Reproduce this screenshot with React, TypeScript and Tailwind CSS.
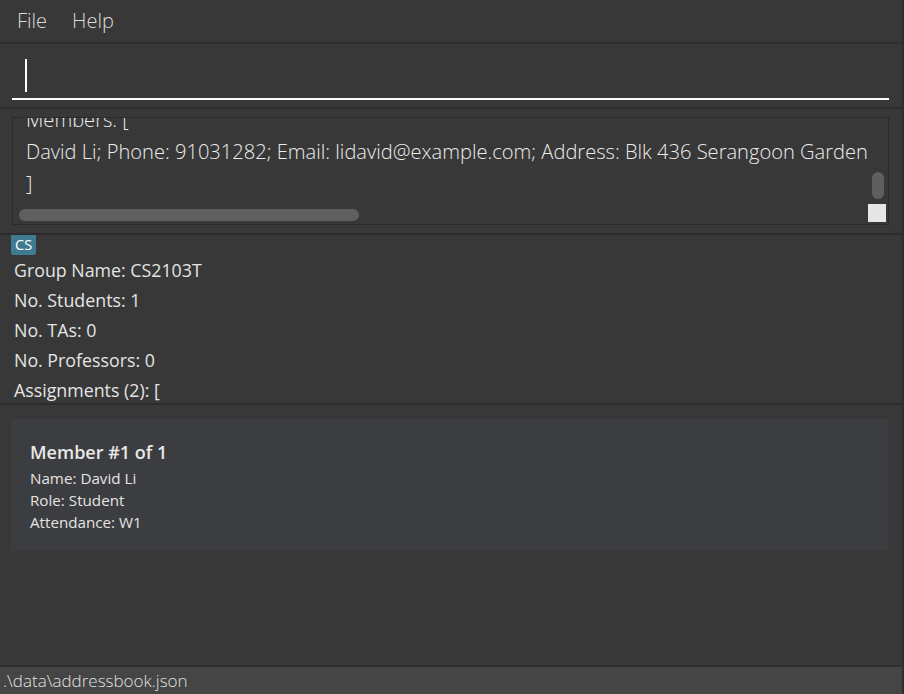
export default function App() {
  const font = { fontFamily: '"Open Sans", "Noto Sans", sans-serif' };
  return (
    <div
      className="w-[904px] h-[694px] bg-[#383838] text-[#e8e8e8] flex flex-col overflow-hidden border-r-2 border-[#2e2e2e]"
      style={font}
    >
      {/* menu bar */}
      <div className="h-[44px] shrink-0 flex items-center gap-[25px] px-[17px] border-b-2 border-[#2f2f2f] text-[20px] font-light text-[#dcdcdc]">
        <span>File</span>
        <span>Help</span>
      </div>

      {/* command box */}
      <div className="h-[65px] shrink-0 pl-[12px] pr-[13px] pt-[14px] border-b-2 border-[#2c2c2c]">
        <div className="h-[42px] border-b-2 border-white flex items-start pl-[13px] pt-[1px]">
          <div className="w-[2px] h-[33px] bg-white" />
        </div>
      </div>

      {/* result display */}
      <div className="h-[126px] shrink-0 pl-[12px] pr-[13px] pt-[8px] pb-[8px] border-b-2 border-[#2c2c2c]">
        <div className="relative h-full border border-[#2a2a2a] bg-[#383838] overflow-hidden">
          <div className="pl-[13px] -mt-[14px] text-[20.1px] font-light leading-[32px] whitespace-nowrap text-[#ececec]">
            <div>Members: [</div>
            <div>David Li; Phone: 91031282; Email: lidavid@example.com; Address: Blk 436 Serangoon Garden</div>
            <div>]</div>
          </div>
          <div className="absolute left-[6px] top-[91px] w-[340px] h-[12px] rounded-full bg-[#5f5f5f]" />
          <div className="absolute right-[4px] top-[54px] w-[12px] h-[27px] rounded-full bg-[#5f5f5f]" />
          <div className="absolute right-[2px] bottom-[2px] w-[18px] h-[18px] bg-[#e6e6e6]" />
        </div>
      </div>

      {/* group panel */}
      <div className="h-[170px] shrink-0 px-[11px] border-b-2 border-[#2c2c2c] overflow-hidden">
        <div className="-mt-[1px] h-[22px] flex">
          <span className="px-[4px] h-[21px] leading-[21px] rounded-[2px] bg-[#3e7b91] text-[14.5px] text-white">
            CS
          </span>
        </div>
        <div className="pl-[3px] -mt-[1px] text-[17.8px] leading-[30px] text-[#e4e4e4]">
          <div>Group Name: CS2103T</div>
          <div>No. Students: 1</div>
          <div>No. TAs: 0</div>
          <div>No. Professors: 0</div>
          <div>Assignments (2): [</div>
        </div>
      </div>

      {/* member card */}
      <div className="flex-1 pl-[11px] pr-[14px] pt-[14px]">
        <div className="h-[132px] bg-[#3c3d40] px-[19px] pt-[20px]">
          <div className="text-[18px] font-semibold leading-[26px] text-[#e8e8e8]">Member #1 of 1</div>
          <div className="mt-[2px] text-[15.2px] leading-[22px] text-[#e4e4e4]">
            <div>Name: David Li</div>
            <div>Role: Student</div>
            <div>Attendance: W1</div>
          </div>
        </div>
      </div>

      {/* status bar */}
      <div className="h-[29px] shrink-0 bg-[#454545] border-t-2 border-[#2e2e2e] px-[3px] text-[17px] font-light leading-[27px] text-[#e0e0e0]">
        .\data\addressbook.json
      </div>
    </div>
  );
}
